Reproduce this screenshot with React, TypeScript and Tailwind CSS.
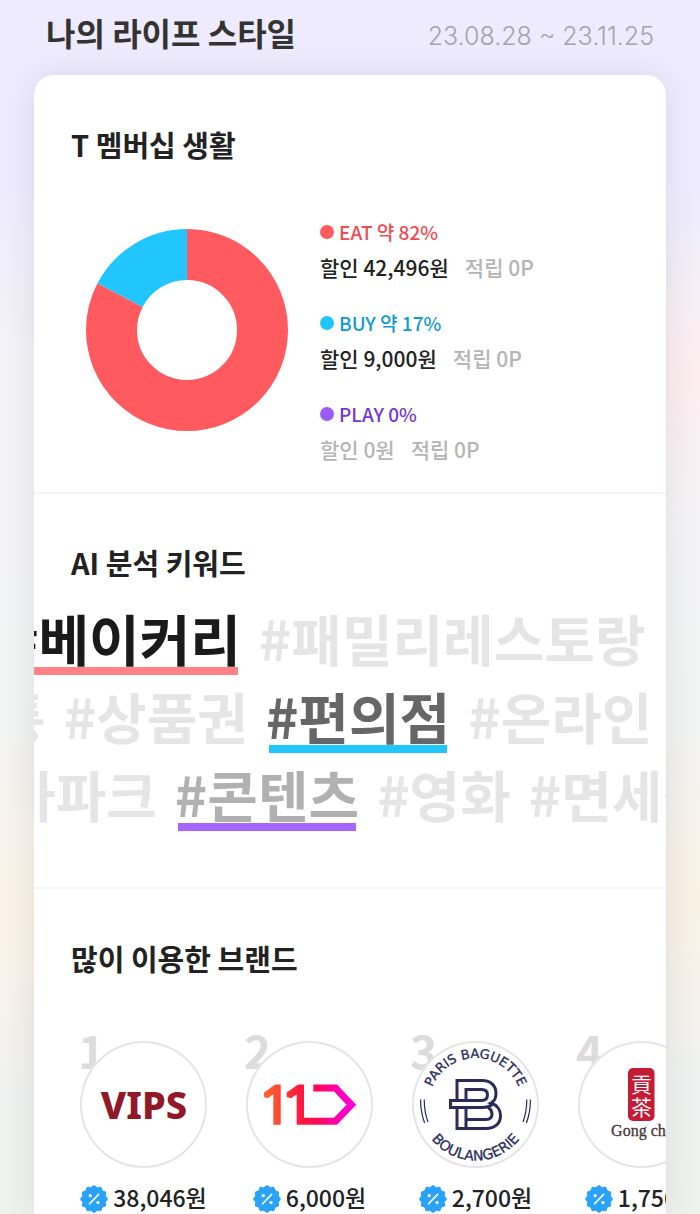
/**
 * Lifestyle report: membership usage, AI keywords and most used brands
 */
import React from 'react';
import clsx from 'clsx';

interface Usage {
  name: string;
  percent: string;
  discount: number;
  points: number;
  color: string;
  textClass: string;
  dotClass: string;
}

interface Keyword {
  label: string;
  textClass?: string;
  barClass?: string;
}

interface Brand {
  name: string;
  discount: number;
  logo: React.ReactNode;
}

const usages: Usage[] = [
  { name: 'EAT', percent: '약 82%', discount: 42496, points: 0, color: '#ff5a5f', textClass: 'text-[#f04b50]', dotClass: 'bg-[#ff5a5f]' },
  { name: 'BUY', percent: '약 17%', discount: 9000, points: 0, color: '#22c6fe', textClass: 'text-[#0f9bcd]', dotClass: 'bg-[#22c6fe]' },
  { name: 'PLAY', percent: '0%', discount: 0, points: 0, color: '#9b5cfb', textClass: 'text-[#7538d4]', dotClass: 'bg-[#9b5cfb]' },
];

const keywordRows: { className: string; keywords: Keyword[] }[] = [
  {
    className: '-ml-7',
    keywords: [
      { label: '#베이커리', textClass: 'text-[#1a1a1a]', barClass: 'bg-[#ff8286]' },
      { label: '#패밀리레스토랑' },
    ],
  },
  {
    className: '-ml-[122px]',
    keywords: [
      { label: '#교통' },
      { label: '#상품권' },
      { label: '#편의점', textClass: 'text-[#666666]', barClass: 'bg-[#22c6fe]' },
      { label: '#온라인' },
    ],
  },
  {
    className: '-ml-28',
    keywords: [
      { label: '#테마파크' },
      { label: '#콘텐츠', textClass: 'text-[#b1b1b1]', barClass: 'bg-[#a566ff]' },
      { label: '#영화' },
      { label: '#면세점' },
    ],
  },
];

function DonutChart() {
  const total = usages.reduce((sum, item) => sum + item.discount, 0);
  const radius = 75.5;
  const length = 2 * Math.PI * radius;
  let used = 0;

  return (
    <svg viewBox="0 0 202 202" className="mt-3 size-[202px] shrink-0" role="img" aria-label="T 멤버십 생활">
      <g transform="rotate(-90 101 101)" fill="none" strokeWidth="51">
        {usages.filter((item) => item.discount > 0).map((item) => {
          const part = (item.discount / total) * length;
          const offset = -used;
          used += part;
          return (
            <circle
              key={item.name}
              cx="101"
              cy="101"
              r={radius}
              stroke={item.color}
              strokeDasharray={`${part} ${length - part}`}
              strokeDashoffset={offset}
            />
          );
        })}
      </g>
    </svg>
  );
}

function DiscountBadge() {
  const points = Array.from({ length: 144 }, (_, i) => {
    const angle = (i / 144) * 2 * Math.PI;
    const r = 13 + 0.8 * Math.cos(angle * 12);
    return `${(14 + r * Math.sin(angle)).toFixed(2)},${(14 - r * Math.cos(angle)).toFixed(2)}`;
  }).join(' ');

  return (
    <svg viewBox="0 0 28 28" className="mt-1 size-7 shrink-0" aria-hidden="true">
      <polygon points={points} fill="#29a2fc" />
      <path d="M18.6 9.4 9.6 18.8" stroke="#fff" strokeWidth="1.6" strokeLinecap="round" />
      <circle cx="10.2" cy="10.7" r="1.6" fill="#fff" />
      <circle cx="18" cy="17.6" r="1.6" fill="#fff" />
    </svg>
  );
}

function VipsLogo() {
  return (
    <svg viewBox="0 0 127 127" className="size-full">
      <text x="64" y="78" textAnchor="middle" className="font-['Noto_Sans',sans-serif] text-[38px] font-extrabold" fill="#911828">
        VIPS
      </text>
    </svg>
  );
}

function ElevenLogo() {
  return (
    <svg viewBox="246 1041 127 127" className="size-full">
      <defs>
        <linearGradient id="eleven" gradientUnits="userSpaceOnUse" x1="264" y1="0" x2="356" y2="0">
          <stop offset="0" stopColor="#ff6a2c" />
          <stop offset="0.35" stopColor="#ff1f3c" />
          <stop offset="0.55" stopColor="#ff0a4c" />
          <stop offset="0.8" stopColor="#ff00b4" />
          <stop offset="1" stopColor="#ff00e0" />
        </linearGradient>
      </defs>
      <g fill="url(#eleven)">
        <path d="M264 1092.5 274 1085.3Q275 1084.6 276.5 1084.6H280.7V1124.7H273.3V1094.3L268 1098.2 264 1097Z" />
        <path d="M286.7 1092.5 297 1085.3Q298 1084.6 299.5 1084.6H304V1117.8H334L346.5 1104.7 334 1091.4H313.3V1084.6H337L356.2 1104.7 337 1124.7H296.7V1094.3L291 1098.2 286.7 1097Z" />
      </g>
    </svg>
  );
}

function ParisBaguetteLogo() {
  return (
    <svg viewBox="0 0 127 127" className="size-full" fill="none" stroke="#2b2b5a">
      <defs>
        <path id="pb-top" d="M17 63.5A46.5 46.5 0 0 1 110 63.5" />
        <path id="pb-bottom" d="M7.5 63.5A56 56 0 0 0 119.5 63.5" />
      </defs>
      <g fill="#2b2b5a" strokeWidth="0.3" className="font-['DejaVu_Sans',sans-serif]">
        <text textAnchor="middle" className="text-[13px]">
          <textPath href="#pb-top" startOffset="50%">PARIS BAGUETTE</textPath>
        </text>
        <text textAnchor="middle" className="text-[14px]">
          <textPath href="#pb-bottom" startOffset="50%">BOULANGERIE</textPath>
        </text>
      </g>
      <path d="M8.7 58.5Q8.3 70 12.6 82M12.3 58.5Q12 70 16 81M118.3 58.5Q118.7 70 114.4 82M114.7 58.5Q115 70 111 81" strokeWidth="1.2" />
      <g strokeWidth="3" strokeLinejoin="miter">
        <path d="M45 39.5H70C79 39.5 84 45 84 52.5C84 57 82 60.5 79 62C85 64 88.5 69 88.5 74.5C88.5 83 82.5 87.5 74 87.5H45V66.5H38.5V59.5H45Z" />
        <path d="M54 59.5V48.5H69.5C73.5 48.5 75.5 50.5 75.5 54C75.5 57.5 73.5 59.5 69.5 59.5H45" />
        <path d="M45 66.5H70C75 66.5 79 65 81 62.5M54 87V66.5M54 78.5H74C78 78.5 80 76.5 80 73C80 70 78.5 68 76 66" />
      </g>
    </svg>
  );
}

function GongChaLogo() {
  return (
    <svg viewBox="0 0 127 127" className="size-full">
      <rect x="50" y="27" width="26.5" height="53" rx="5" fill="#c41c34" />
      <g fill="#fff" textAnchor="middle" className="font-['Noto_Sans_CJK_TC',sans-serif] text-[21px]">
        <text x="63.5" y="51">貢</text>
        <text x="63.5" y="74">茶</text>
      </g>
      <text x="64" y="95" textAnchor="middle" fill="#453638" stroke="#453638" strokeWidth="0.3" className="font-['Liberation_Serif',serif] text-[16px]">
        Gong cha
      </text>
    </svg>
  );
}

const brands: Brand[] = [
  { name: 'VIPS', discount: 38046, logo: <VipsLogo /> },
  { name: '11', discount: 6000, logo: <ElevenLogo /> },
  { name: 'PARIS BAGUETTE', discount: 2700, logo: <ParisBaguetteLogo /> },
  { name: 'Gong cha', discount: 1750, logo: <GongChaLogo /> },
];

function SectionTitle({ children }: { children: React.ReactNode }) {
  return <h2 className="px-[37px] text-[29px] leading-[42px] font-bold text-[#222222]">{children}</h2>;
}

export default function App() {
  return (
    <div className="flex h-screen flex-col overflow-hidden bg-linear-to-b from-[#eeebfe] from-15% via-[#f4f4f6] via-32% to-[#eff1ef] font-['Noto_Sans_CJK_KR',sans-serif]">
      <div className="flex min-h-0 flex-1 flex-col bg-[radial-gradient(circle_at_100%_31%,#fdecf0_0,transparent_150px),radial-gradient(circle_at_0_75%,#fcf2e6_0,transparent_180px),radial-gradient(circle_at_100%_74%,#faf1e4_0,transparent_170px)] px-[34px]">
        <header className="flex items-center justify-between pt-2 pr-3 pb-[19px] pl-3">
          <h1 className="text-[32px] leading-[48px] font-bold text-[#333333]">나의 라이프 스타일</h1>
          <p className="pt-2 font-['Inter',sans-serif] text-[25px] leading-10 font-light text-[#a5a3aa]">
            23.08.28 ~ 23.11.25
          </p>
        </header>

        <main className="flex-1 overflow-hidden rounded-t-[20px] bg-white shadow-[0_0_32px_rgba(0,0,0,0.09)]">
          <section className="pt-12 pb-[23px]">
            <SectionTitle>T 멤버십 생활</SectionTitle>
            <div className="mt-[52px] flex gap-8 pl-[52px]">
              <DonutChart />
              <ul className="flex flex-col gap-[21px]">
                {usages.map((item) => (
                  <li key={item.name}>
                    <p className={clsx('flex items-center gap-[5px] text-[19px] leading-[30px] font-medium', item.textClass)}>
                      <span className={clsx('size-[14px] rounded-full', item.dotClass)} />
                      {item.name} {item.percent}
                    </p>
                    <p className="flex gap-4 text-[21px] leading-[40px] font-medium text-[#b5b5b5]">
                      <span className={item.discount > 0 ? 'text-[#222222]' : ''}>
                        할인 {item.discount.toLocaleString('ko-KR')}원
                      </span>
                      <span>적립 {item.points}P</span>
                    </p>
                  </li>
                ))}
              </ul>
            </div>
          </section>

          <section className="border-t-2 border-[#f4f4f5] pt-[47px] pb-14">
            <SectionTitle>AI 분석 키워드</SectionTitle>
            <div className="mt-6 flex flex-col gap-[10px]">
              {keywordRows.map((row) => (
                <ul key={row.className} className={clsx('flex gap-[18px] whitespace-nowrap', row.className)}>
                  {row.keywords.map((keyword) => (
                    <li key={keyword.label} className="flex flex-col">
                      <span className={clsx('text-[55px] leading-[60px] font-bold', keyword.textClass ?? 'text-[#e5e5e5]')}>
                        {keyword.label}
                      </span>
                      <span className={clsx('mx-[3px] h-2', keyword.barClass)} />
                    </li>
                  ))}
                </ul>
              ))}
            </div>
          </section>

          <section className="border-t-2 border-[#f4f4f5] pt-12">
            <SectionTitle>많이 이용한 브랜드</SectionTitle>
            <ol className="mt-[62px] flex gap-[39px] pl-[46px]">
              {brands.map((brand, index) => (
                <li key={brand.name} className="relative w-[127px] shrink-0">
                  <span className="absolute -top-3 -left-0.5 text-[46px] leading-[40px] font-bold text-[#dcdcdc]">
                    {index + 1}
                  </span>
                  <div className="relative size-[127px] overflow-hidden rounded-full bg-white ring-2 ring-[#e5e5e5] ring-inset">
                    {brand.logo}
                  </div>
                  <p className="mt-[13px] flex items-center justify-center gap-[5px] text-[23px] leading-8 font-medium whitespace-nowrap text-[#222222]">
                    <DiscountBadge />
                    {brand.discount.toLocaleString('ko-KR')}원
                  </p>
                </li>
              ))}
            </ol>
          </section>
        </main>
      </div>
    </div>
  );
}
